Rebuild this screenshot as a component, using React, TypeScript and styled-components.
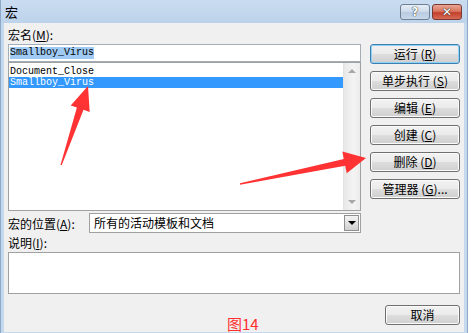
import styled, { createGlobalStyle } from "styled-components";

const GlobalStyle = createGlobalStyle`
  body {
    margin: 0;
    background: #ffffff;
    font-family: "Noto Sans CJK SC", "Noto Sans", sans-serif;
  }
`;

const Page = styled.div`
  position: relative;
  width: 471px;
  height: 333px;
  overflow: hidden;
`;

const Window = styled.div`
  width: 468px;
  height: 336px;
  box-sizing: border-box;
  display: flex;
  flex-direction: column;
  background: #c4d8ee;
  border: 1px solid #8ea9c8;
  border-top: none;
`;

const TitleBar = styled.div`
  height: 23px;
  display: flex;
  align-items: center;
  padding: 0 5px 0 4px;
  background: linear-gradient(#cadcf0, #bcd3eb);
`;

const Title = styled.span`
  flex: 1;
  font-size: 13px;
  color: #000;
  line-height: 1;
`;

const CaptionButton = styled.div<{ $close?: boolean }>`
  width: 30px;
  height: 16px;
  margin-left: ${(p) => (p.$close ? 2 : 0)}px;
  box-sizing: border-box;
  border: 1px solid ${(p) => (p.$close ? "#7a3a34" : "#6f7f94")};
  border-radius: 3px;
  display: flex;
  align-items: center;
  justify-content: center;
  background: ${(p) =>
    p.$close
      ? "linear-gradient(#e9a595 0%, #d9755f 45%, #c4402c 55%, #d66a55 100%)"
      : "linear-gradient(#e6eef7 0%, #cfdcec 45%, #b9cbe0 55%, #c9d8ea 100%)"};
  color: #fff;
  font-family: "DejaVu Sans", sans-serif;
  font-weight: bold;
  font-size: 12px;
  text-shadow: 0 0 1px #222, 0 0 1px #222;
`;

const Client = styled.div`
  flex: 1;
  margin: 0 3px 3px;
  background: #f0f0f0;
  padding: 5px 4px 0 4px;
  display: flex;
  flex-direction: column;
  font-size: 12px;
  color: #000;
`;

const Upper = styled.div`
  display: flex;
  gap: 9px;
`;

const LeftCol = styled.div`
  width: 353px;
  display: flex;
  flex-direction: column;
`;

const Label = styled.div<{ $top?: number }>`
  height: 16px;
  line-height: 14px;
  margin-top: ${(p) => p.$top ?? 0}px;
  white-space: nowrap;
`;

const Key = styled.span`
  text-decoration: underline;
`;

const Input = styled.div`
  height: 18px;
  box-sizing: border-box;
  border: 1px solid #a7adb6;
  background: #fff;
  padding: 1px 1px;
  display: flex;
  align-items: center;
`;

const MonoSelected = styled.span`
  font-family: "Liberation Mono", monospace;
  font-size: 10px;
  line-height: 12px;
  background: #9fcaf3;
  color: #000;
`;

const List = styled.div`
  height: 149px;
  box-sizing: border-box;
  border: 1px solid #a0a0a0;
  background: #fff;
  display: flex;
`;

const Items = styled.div`
  flex: 1;
  padding-top: 3px;
`;

const Row = styled.div<{ $selected?: boolean }>`
  height: 11px;
  line-height: 11px;
  padding-left: 1px;
  font-family: "Liberation Mono", monospace;
  font-size: 10px;
  background: ${(p) => (p.$selected ? "#3399ff" : "transparent")};
  color: ${(p) => (p.$selected ? "#fff" : "#000")};
`;

const ScrollBar = styled.div`
  width: 16px;
  display: flex;
  flex-direction: column;
  justify-content: space-between;
  align-items: center;
  background: linear-gradient(90deg, #e8e8e8, #f4f4f4 60%, #ececec);
  border-left: 1px solid #e3e3e3;
  padding: 6px 0 6px;
`;

const Triangle = styled.div<{ $down?: boolean; $color?: string }>`
  width: 0;
  height: 0;
  border-left: 4px solid transparent;
  border-right: 4px solid transparent;
  ${(p) =>
    p.$down
      ? `border-top: 4px solid ${p.$color ?? "#a8a8a8"};`
      : `border-bottom: 4px solid ${p.$color ?? "#a8a8a8"};`}
`;

const ComboRow = styled.div`
  display: flex;
  align-items: center;
  margin-top: 2px;
`;

const ComboLabel = styled.div`
  width: 81px;
  white-space: nowrap;
`;

const Combo = styled.div`
  flex: 1;
  height: 20px;
  box-sizing: border-box;
  border: 1px solid #a0a0a0;
  background: #fff;
  display: flex;
  align-items: center;
  padding: 1px;
`;

const ComboText = styled.div`
  flex: 1;
  padding-left: 3px;
  line-height: 16px;
`;

const ComboButton = styled.div`
  width: 15px;
  height: 16px;
  box-sizing: border-box;
  border: 1px solid #8e8f8f;
  background: linear-gradient(#f4f4f4, #e2e2e2 50%, #cfcfcf);
  display: flex;
  align-items: center;
  justify-content: center;
`;

const ButtonCol = styled.div`
  width: 90px;
  padding-top: 16px;
  display: flex;
  flex-direction: column;
  gap: 7px;
`;

const Button = styled.div<{ $default?: boolean; $width?: number }>`
  width: ${(p) => p.$width ?? 90}px;
  height: 20px;
  box-sizing: border-box;
  border: 1px solid ${(p) => (p.$default ? "#3c7fb1" : "#707070")};
  border-radius: 3px;
  background: linear-gradient(#f2f2f2 0%, #ebebeb 48%, #dddddd 52%, #cfcfcf 100%);
  box-shadow: ${(p) =>
    p.$default ? "inset 0 0 0 1px #8fd0f5" : "inset 0 0 0 1px #fbfbfb"};
  display: flex;
  align-items: center;
  justify-content: center;
  line-height: 1;
  white-space: nowrap;
`;

const Description = styled.div`
  height: 42px;
  box-sizing: border-box;
  border: 1px solid #a0a0a0;
  background: #fff;
`;

const Footer = styled.div`
  display: flex;
  justify-content: flex-end;
  margin-top: 11px;
`;

const Caption = styled.div`
  position: absolute;
  left: 227px;
  top: 316px;
  font-size: 15px;
  line-height: 16px;
  color: #ff3030;
`;

const Overlay = styled.svg`
  position: absolute;
  left: 0;
  top: 0;
  pointer-events: none;
`;

const buttons: { text: string; key: string; rest?: string }[] = [
  { text: "运行", key: "R" },
  { text: "单步执行", key: "S" },
  { text: "编辑", key: "E" },
  { text: "创建", key: "C" },
  { text: "删除", key: "D" },
  { text: "管理器", key: "G", rest: "..." },
];

export default function App() {
  return (
    <Page>
      <GlobalStyle />
      <Window>
        <TitleBar>
          <Title>宏</Title>
          <CaptionButton>?</CaptionButton>
          <CaptionButton $close>✕</CaptionButton>
        </TitleBar>
        <Client>
          <Upper>
            <LeftCol>
              <Label>
                宏名(<Key>M</Key>):
              </Label>
              <Input>
                <MonoSelected>Smallboy_Virus</MonoSelected>
              </Input>
              <List>
                <Items>
                  <Row>Document_Close</Row>
                  <Row $selected>Smallboy_Virus</Row>
                </Items>
                <ScrollBar>
                  <Triangle />
                  <Triangle $down />
                </ScrollBar>
              </List>
              <ComboRow>
                <ComboLabel>
                  宏的位置(<Key>A</Key>):
                </ComboLabel>
                <Combo>
                  <ComboText>所有的活动模板和文档</ComboText>
                  <ComboButton>
                    <Triangle $down $color="#000" />
                  </ComboButton>
                </Combo>
              </ComboRow>
            </LeftCol>
            <ButtonCol>
              {buttons.map((b, i) => (
                <Button key={b.key} $default={i === 0}>
                  {b.text} (<Key>{b.key}</Key>){b.rest ?? ""}
                </Button>
              ))}
            </ButtonCol>
          </Upper>
          <Label $top={3}>
            说明(<Key>I</Key>):
          </Label>
          <Description />
          <Footer>
            <Button $width={75}>取消</Button>
          </Footer>
        </Client>
      </Window>
      <Caption>图14</Caption>
      <Overlay width="471" height="333" viewBox="0 0 471 333">
        <polygon
          fill="#ff3333"
          points="60.5,165 76.9,107.6 70.7,105.5 88,86 89.7,111.9 83.5,109.8 61.8,165"
        />
        <polygon
          fill="#ff3333"
          points="240,183.3 343.8,159 342.3,151.6 366,158 346.7,173.2 345.2,165.8 240,184.8"
        />
      </Overlay>
    </Page>
  );
}
